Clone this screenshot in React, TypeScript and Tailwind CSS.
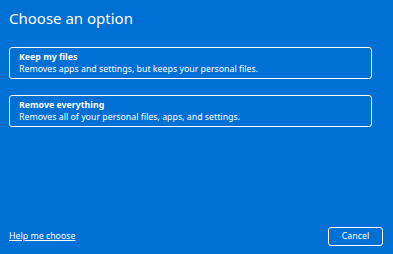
export default function App() {
  return (
    <div className="flex h-[254px] w-[393px] flex-col bg-[#0070d5] text-white" style={{ fontFamily: '"Noto Sans", "Open Sans", sans-serif' }}>
      <h1 className="pl-[9px] pt-[8px] text-[15px] leading-[20px] font-normal">Choose an option</h1>
      <div className="mt-[19px] flex flex-col gap-[16px] pl-[9px] pr-[21px]">
        <button className="flex h-[32px] flex-col items-start justify-center rounded-[3px] border-[1.5px] border-white px-[9px] text-left">
          <span className="text-[8.8px] leading-[12px] font-bold">Keep my files</span>
          <span className="text-[8.8px] leading-[12px]">Removes apps and settings, but keeps your personal files.</span>
        </button>
        <button className="flex h-[32px] flex-col items-start justify-center rounded-[3px] border-[1.5px] border-white px-[9px] text-left">
          <span className="text-[8.8px] leading-[12px] font-bold">Remove everything</span>
          <span className="text-[8.8px] leading-[12px]">Removes all of your personal files, apps, and settings.</span>
        </button>
      </div>
      <div className="mt-auto flex items-center justify-between pb-[8px] pl-[9px] pr-[10px]">
        <a href="#" className="text-[8.8px] underline">Help me choose</a>
        <button className="h-[19px] w-[55px] rounded-[3px] border-[1.5px] border-white text-[8.8px]">Cancel</button>
      </div>
    </div>
  );
}
